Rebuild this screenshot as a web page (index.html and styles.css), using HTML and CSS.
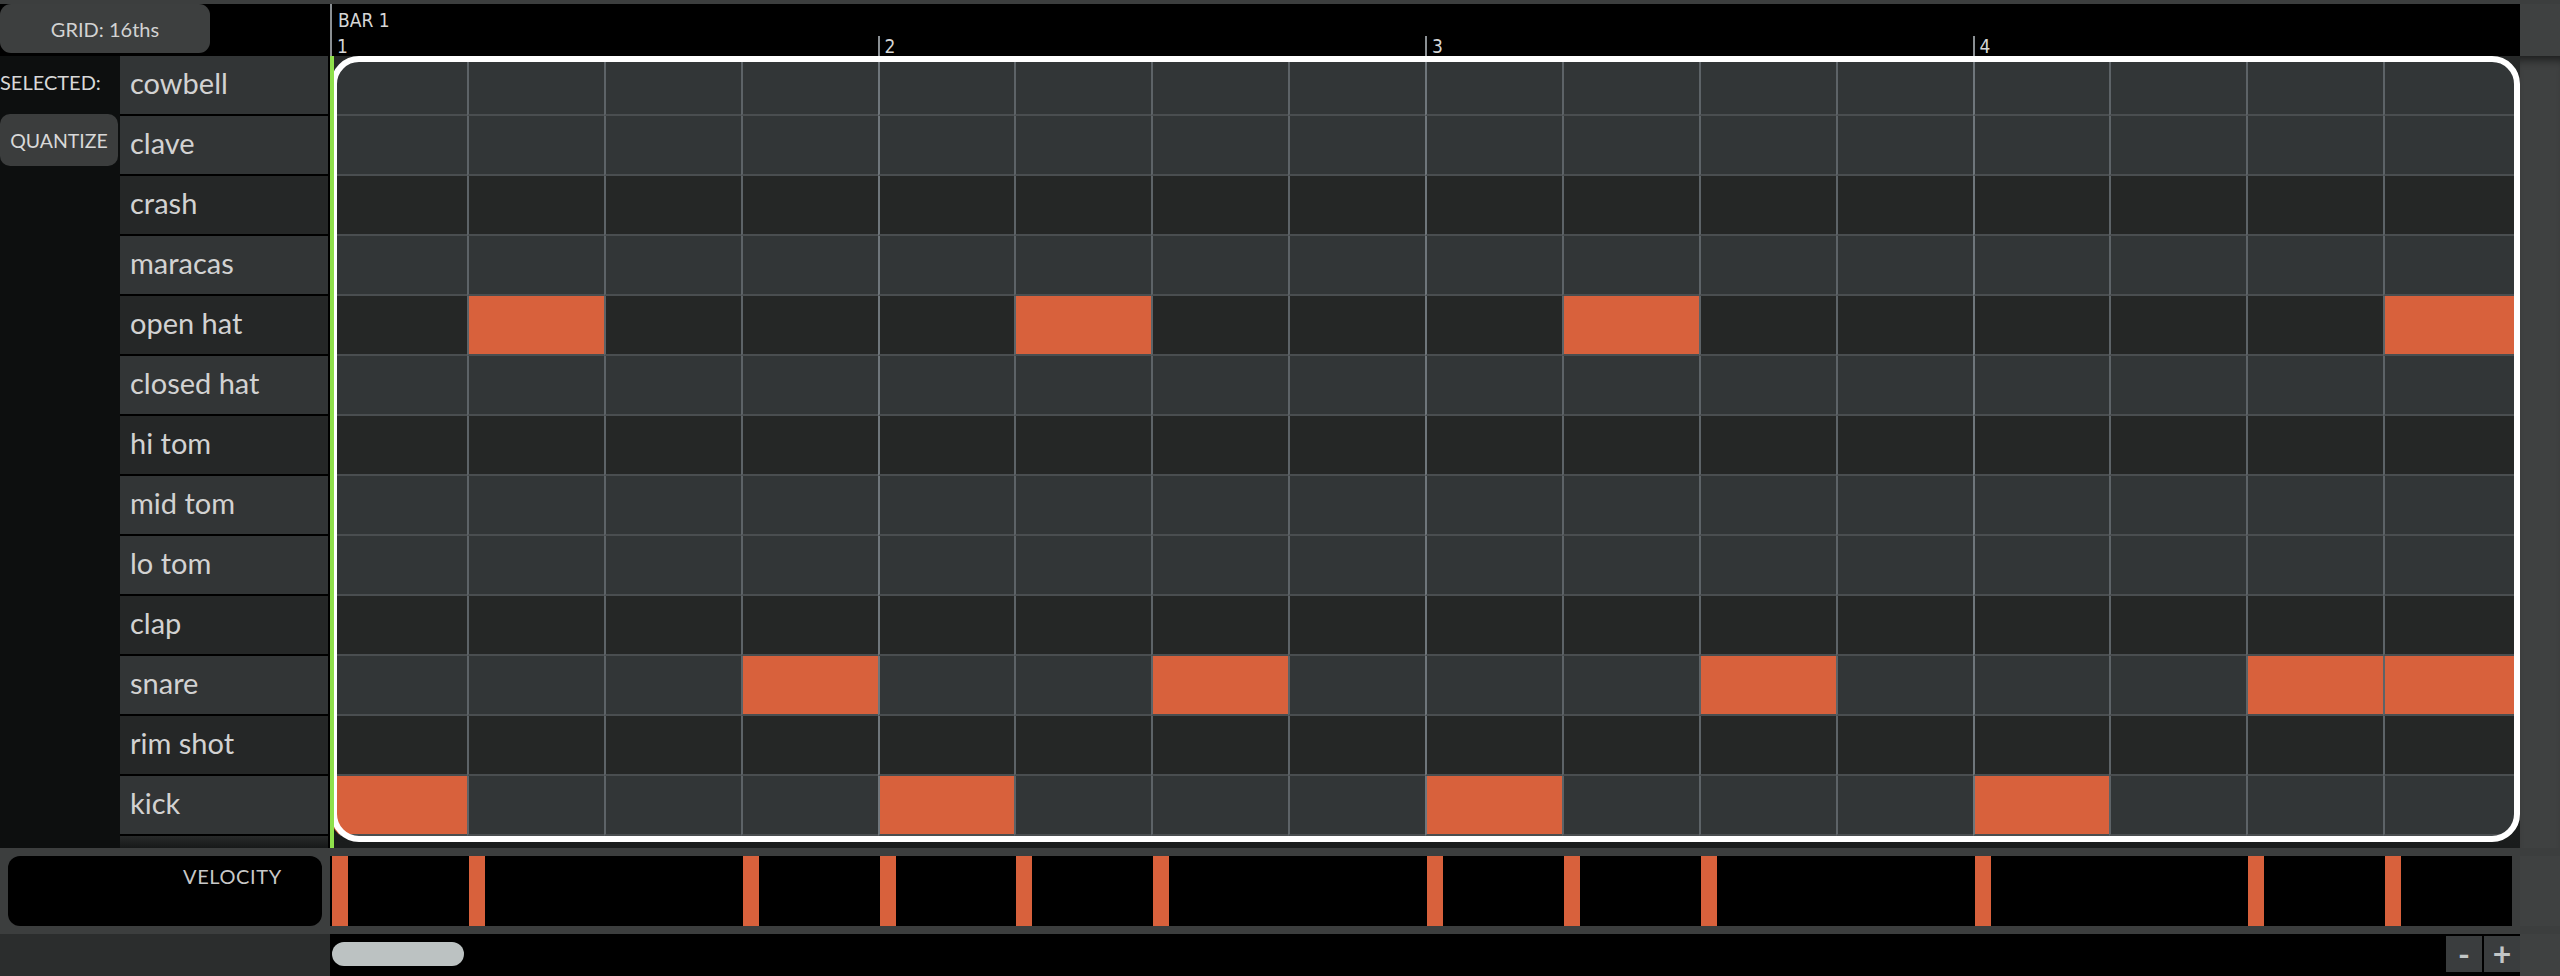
FILE: index.html
```html
<!DOCTYPE html>
<html lang="en">
<head>
    <meta charset="UTF-8">
    <title>Drum Editor</title>
    <link rel="stylesheet" href="styles.css">
</head>
<body>
    <div class="app">
        <!-- top bar: grid setting + bar ruler -->
        <header class="topbar">
            <div class="topbar-left">
                <button class="grid-btn">GRID: 16ths</button>
            </div>
            <div class="ruler">
                <div class="bar-title">BAR 1</div>
                <div class="bars">
                    <div class="bar first">1</div>
                    <div class="bar">2</div>
                    <div class="bar">3</div>
                    <div class="bar">4</div>
                </div>
            </div>
            <div class="side-panel"></div>
        </header>

        <!-- lanes + step grid -->
        <section class="editor">
            <aside class="tools">
                <div class="selected">SELECTED:</div>
                <button class="quantize">QUANTIZE</button>
            </aside>
            <ul class="lanes">
                <li class="lane light">cowbell</li>
                <li class="lane light">clave</li>
                <li class="lane dark">crash</li>
                <li class="lane light">maracas</li>
                <li class="lane dark">open hat</li>
                <li class="lane light">closed hat</li>
                <li class="lane dark">hi tom</li>
                <li class="lane light">mid tom</li>
                <li class="lane light">lo tom</li>
                <li class="lane dark">clap</li>
                <li class="lane light">snare</li>
                <li class="lane dark">rim shot</li>
                <li class="lane light">kick</li>
                <li class="lane-foot"></li>
            </ul>
            <div class="grid-wrap">
                <div class="grid-clip">
                    <div class="grid" id="grid"></div>
                </div>
                <div class="frame"></div>
                <div class="playhead"></div>
            </div>
            <div class="side-panel shade"></div>
        </section>

        <!-- velocity lane -->
        <section class="velocity">
            <div class="vel-left">
                <div class="vel-box">VELOCITY</div>
            </div>
            <div class="vel-graph" id="velGraph"></div>
            <div class="vel-gap"></div>
            <div class="side-panel"></div>
        </section>

        <!-- scroll + zoom -->
        <footer class="scroll">
            <div class="scroll-left"></div>
            <div class="scroll-track">
                <div class="thumb"></div>
                <div class="zoom">
                    <button class="zoom-btn minus">-</button>
                    <button class="zoom-btn plus">+</button>
                </div>
            </div>
            <div class="side-panel"></div>
        </footer>
    </div>

    <script>
        // pattern data: lane shade + active steps
        const lanes = [
            ["light", []], ["light", []], ["dark", []], ["light", []],
            ["dark", [1, 5, 9, 15]], ["light", []], ["dark", []], ["light", []],
            ["light", []], ["dark", []], ["light", [3, 6, 10, 14, 15]],
            ["dark", []], ["light", [0, 4, 8, 12]]
        ];
        const grid = document.getElementById("grid");
        const used = new Set();

        lanes.forEach(function (lane) {
            for (let i = 0; i < 16; i++) {
                const cell = document.createElement("div");
                cell.className = "cell " + lane[0];
                if (i % 4 === 0) cell.classList.add("beat");
                if (lane[1].includes(i)) {
                    cell.classList.add("on");
                    used.add(i);
                }
                grid.appendChild(cell);
            }
        });

        // velocity bars, one per step that has a note
        const vel = document.getElementById("velGraph");
        for (let i = 0; i < 16; i++) {
            const slot = document.createElement("div");
            slot.className = "vel-slot";
            if (used.has(i)) {
                const bar = document.createElement("div");
                bar.className = "vel-bar";
                slot.appendChild(bar);
            }
            vel.appendChild(slot);
        }
    </script>
</body>
</html>
```

FILE: styles.css
```css
* {
    box-sizing: border-box;
}
body {
    margin: 0;
    background-color: #3c3e3e;
    font-family: Lato, "Open Sans", sans-serif;
    color: #d4d4d4;
    overflow: hidden;
}
button {
    font-family: inherit;
    border: none;
    cursor: pointer;
}
.app {
    width: 2560px;
    height: 976px;
    padding-top: 4px;
    display: flex;
    flex-direction: column;
}
.side-panel {
    width: 40px;
    flex-shrink: 0;
    background-color: #3f4141;
}
.side-panel.shade {
    box-shadow: inset 0 10px 8px -6px rgba(0, 0, 0, 0.55);
}

/* top bar */
.topbar {
    display: flex;
    height: 52px;
}
.topbar-left {
    width: 330px;
    background-color: #000;
}
.grid-btn {
    width: 210px;
    height: 49px;
    border-radius: 11px;
    background-color: #3d3f3f;
    color: #d2d2d2;
    font-size: 20px;
}
.ruler {
    width: 2190px;
    background-color: #000;
    border-left: 2px solid #8a8f93;
    display: flex;
    flex-direction: column;
    justify-content: space-between;
    font-family: "DejaVu Sans Condensed", "DejaVu Sans", sans-serif;
    font-stretch: condensed;
    font-size: 19px;
    color: #d6d6d6;
}
.bar-title {
    padding: 5px 0 0 6px;
    line-height: 22px;
}
.bars {
    display: flex;
    height: 20px;
}
.bar {
    flex: 1;
    border-left: 2px solid #8a8f93;
    padding-left: 5px;
    line-height: 20px;
}
.bar.first {
    border-left: none;
}

/* editor */
.editor {
    display: flex;
    height: 792px;
    background-color: #000;
}
.tools {
    width: 120px;
    background-color: #0d0f0f;
}
.selected {
    margin-top: 15px;
    font-size: 20px;
    line-height: 22px;
    color: #d8d8d8;
}
.quantize {
    margin-top: 21px;
    width: 118px;
    height: 52px;
    border-radius: 10px;
    background-color: #3b3d3d;
    color: #d8d8d8;
    font-size: 19.5px;
}
.lanes {
    list-style: none;
    margin: 0 2px 0 0;
    padding: 0;
    width: 208px;
    display: flex;
    flex-direction: column;
    gap: 2px;
}
.lane {
    height: 58px;
    display: flex;
    align-items: center;
    padding: 0 0 5px 10px;
    font-size: 29px;
    color: #d2d2d2;
}
.lane.light {
    background-color: #323536;
}
.lane.dark {
    background-color: #252727;
}
.lane-foot {
    flex: 1;
    background: linear-gradient(#282a2a, #161818);
}
.grid-wrap {
    position: relative;
    width: 2190px;
    background: linear-gradient(#262828, #1a1c1c);
}
.grid-clip {
    height: 786px;
    border-radius: 28px;
    overflow: hidden;
    background-color: #1e2020;
}
.grid {
    display: grid;
    grid-template-columns: repeat(16, 1fr);
    grid-auto-rows: 60px;
}
.cell {
    border-left: 2px solid #5d6367;
    border-bottom: 2px solid #4a4e50;
}
.cell.beat {
    border-left-color: #6f767b;
}
.cell.light {
    background-color: #323637;
}
.cell.dark {
    background-color: #252726;
}
.cell.on {
    background-color: #d8613c;
}
.frame {
    position: absolute;
    left: 1px;
    top: 0;
    width: 2189px;
    height: 786px;
    border: 6px solid #fff;
    border-radius: 28px;
}
.playhead {
    position: absolute;
    left: 0;
    top: 0;
    bottom: 0;
    width: 4px;
    background-color: #8fe04b;
}

/* velocity */
.velocity {
    display: flex;
    height: 70px;
    margin-top: 8px;
}
.vel-left {
    width: 330px;
    padding: 0 8px;
}
.vel-box {
    height: 70px;
    border-radius: 12px;
    background-color: #000;
    padding: 8px 0 0 175px;
    font-size: 20px;
    letter-spacing: 0.6px;
    color: #c8c8c8;
}
.vel-graph {
    width: 2182px;
    background-color: #000;
    display: grid;
    grid-template-columns: repeat(16, 136.875px);
    overflow: hidden;
}
.vel-slot {
    padding-left: 2px;
}
.vel-bar {
    width: 16px;
    height: 100%;
    background-color: #d8613c;
}
.vel-gap {
    width: 8px;
}

/* scroll bar */
.scroll {
    display: flex;
    height: 42px;
    margin-top: 8px;
}
.scroll-left {
    width: 330px;
    background-color: #2b2d2d;
}
.scroll-track {
    width: 2190px;
    background-color: #000;
    display: flex;
    justify-content: space-between;
}
.thumb {
    width: 132px;
    height: 24px;
    margin: 8px 0 0 2px;
    border-radius: 12px;
    background-color: #bcc2c2;
}
.zoom {
    display: flex;
    gap: 2px;
    padding-top: 2px;
}
.zoom-btn {
    width: 36px;
    height: 36px;
    padding: 0;
    background-color: #3a3d3e;
    color: #c2c6c6;
    font-size: 32px;
    font-weight: bold;
    line-height: 36px;
}
```
